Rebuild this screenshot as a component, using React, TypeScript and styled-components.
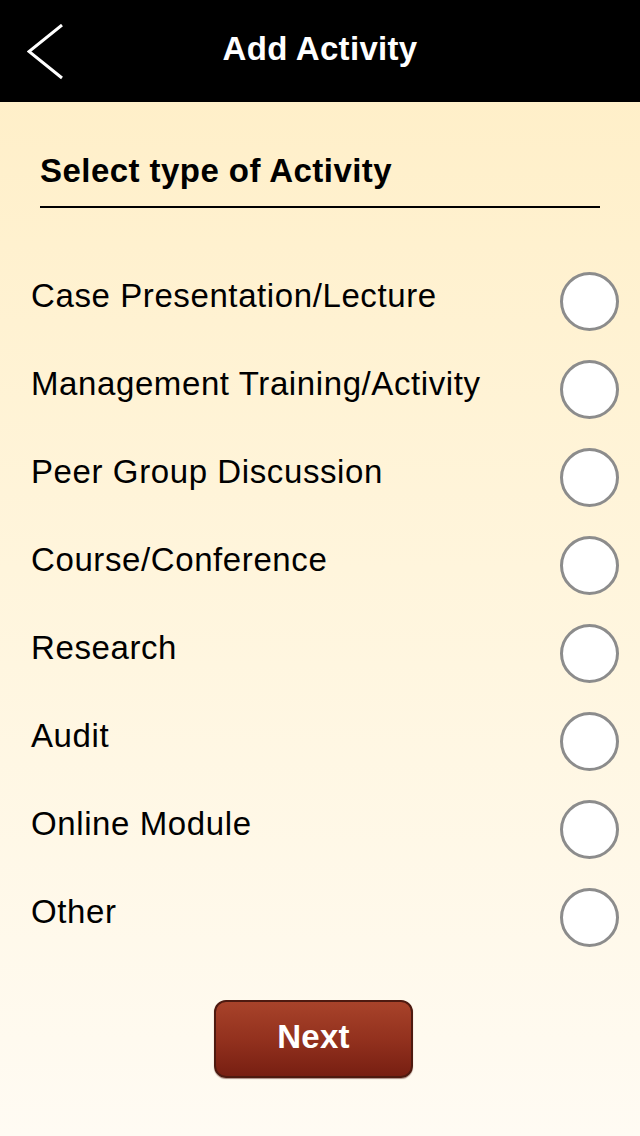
import React, { useState } from "react";
import styled, { createGlobalStyle } from "styled-components";

const Global = createGlobalStyle`
  html, body { margin: 0; padding: 0; }
  body { font-family: "Liberation Sans", Arial, Helvetica, sans-serif; }
  * { box-sizing: border-box; }
`;

const Screen = styled.div`
  width: 640px;
  height: 1136px;
  display: flex;
  flex-direction: column;
  background: linear-gradient(to bottom, #ffeec5 0%, #fff5dc 50%, #fffbf3 100%);
  overflow: hidden;
`;

const Header = styled.header`
  height: 102px;
  background: #000;
  display: grid;
  grid-template-columns: 1fr auto 1fr;
  align-items: center;
`;

const BackButton = styled.button`
  justify-self: start;
  background: none;
  border: 0;
  padding: 0 0 0 27px;
  height: 60px;
  display: flex;
  align-items: center;
  cursor: pointer;
  margin-top: 6px;
`;

const HeaderTitle = styled.h1`
  margin: 0 0 4px;
  color: #fff;
  font-size: 33px;
  font-weight: 700;
  line-height: 38px;
  letter-spacing: 0.3px;
`;

const Content = styled.main`
  display: flex;
  flex-direction: column;
  padding-top: 50px;
`;

const SectionTitle = styled.h2`
  margin: 0 40px;
  padding-bottom: 16px;
  border-bottom: 2px solid #000;
  font-size: 33px;
  font-weight: 700;
  line-height: 38px;
  letter-spacing: 0.45px;
  color: #000;
`;

const List = styled.ul`
  list-style: none;
  margin: 49px 0 0;
  padding: 0;
`;

const Row = styled.li`
  height: 88px;
  display: flex;
  align-items: center;
  justify-content: space-between;
  padding: 0 21px 0 31px;
  cursor: pointer;
`;

const Label = styled.span`
  font-size: 33px;
  line-height: 38px;
  letter-spacing: 0.6px;
  color: #000;
  margin-bottom: 10px;
`;

const Radio = styled.span<{ $checked: boolean }>`
  width: 59px;
  height: 59px;
  border-radius: 50%;
  border: 3px solid #8c8c8c;
  background: #fff;
  display: flex;
  align-items: center;
  justify-content: center;
  &::after {
    content: "";
    width: 33px;
    height: 33px;
    border-radius: 50%;
    background: ${(p) => (p.$checked ? "#8c2a17" : "transparent")};
  }
`;

const Footer = styled.div`
  display: flex;
  justify-content: center;
  margin-top: 39px;
  padding-right: 13px;
`;

const NextButton = styled.button`
  width: 199px;
  height: 78px;
  border-radius: 12px;
  border: 2px solid #4e1a10;
  background: linear-gradient(to bottom, #a8432a 0%, #93311e 50%, #771f12 100%);
  color: #fff;
  font-family: "Liberation Sans", Arial, sans-serif;
  font-size: 33px;
  font-weight: 700;
  letter-spacing: 0.3px;
  box-shadow: 0 1px 1px rgba(80, 30, 20, 0.5);
  cursor: pointer;
  padding: 0 0 4px;
`;

const options = [
  "Case Presentation/Lecture",
  "Management Training/Activity",
  "Peer Group Discussion",
  "Course/Conference",
  "Research",
  "Audit",
  "Online Module",
  "Other",
];

export default function App() {
  const [selected, setSelected] = useState<number | null>(null);
  return (
    <>
      <Global />
      <Screen>
        <Header>
          <BackButton aria-label="Back">
            <svg width="40" height="60" viewBox="0 0 40 60">
              <polyline
                points="35,1 2,27.5 35,54"
                fill="none"
                stroke="#fff"
                strokeWidth="3"
              />
            </svg>
          </BackButton>
          <HeaderTitle>Add Activity</HeaderTitle>
          <span />
        </Header>
        <Content>
          <SectionTitle>Select type of Activity</SectionTitle>
          <List>
            {options.map((o, i) => (
              <Row key={o} onClick={() => setSelected(i)}>
                <Label>{o}</Label>
                <Radio $checked={selected === i} />
              </Row>
            ))}
          </List>
          <Footer>
            <NextButton>Next</NextButton>
          </Footer>
        </Content>
      </Screen>
    </>
  );
}
